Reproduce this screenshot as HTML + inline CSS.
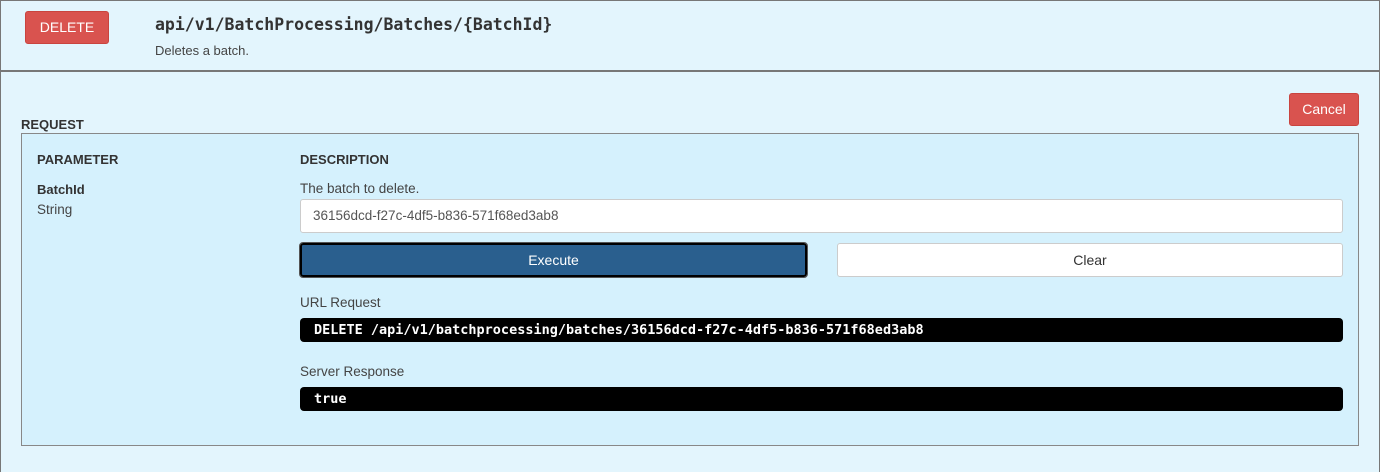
<!DOCTYPE html>
<html><head><style>
body{margin:0;width:1380px;height:471px;overflow:hidden;background:#e3f5fd;font-family:"Liberation Sans",sans-serif;color:#333;}
.page{position:absolute;left:0;top:0;width:1378px;height:471px;border:1px solid #777;border-bottom:none;background:#e3f5fd;}
.hdr{position:absolute;left:-1px;top:-1px;width:1380px;height:70px;border-bottom:2px solid #777;}
.del{position:absolute;left:25px;top:11px;width:84px;height:33px;background:#d9534f;border:1px solid #c9443f;border-radius:3px;color:#fff;font-size:14px;line-height:31px;text-align:center;box-sizing:border-box;}
.path{position:absolute;left:155px;top:15px;font-family:"DejaVu Sans Mono","Liberation Mono",monospace;font-weight:bold;font-size:16.5px;color:#333;}
.desc{position:absolute;left:155px;top:43px;font-size:13px;color:#444;}
.cancel{position:absolute;left:1288px;top:92px;width:70px;height:33px;background:#d9534f;border:1px solid #c9443f;border-radius:3px;color:#fff;font-size:14px;line-height:31px;text-align:center;box-sizing:border-box;}
.req{position:absolute;left:20px;top:116px;font-size:13px;font-weight:bold;color:#333;}
.box{position:absolute;left:20px;top:132px;width:1338px;height:313px;border:1px solid #888;background:#d5f1fd;box-sizing:border-box;}
.lbl{position:absolute;font-size:13px;font-weight:bold;color:#333;}
.t{position:absolute;font-size:13.5px;color:#444;}
.input{position:absolute;left:278px;top:65px;width:1043px;height:34px;background:#fff;border:1px solid #ccc;border-radius:3px;box-sizing:border-box;font-size:13.5px;color:#555;padding:8px 12px;}
.exec{position:absolute;left:278px;top:109px;width:507px;height:34px;background:#2a5f8e;border:2px solid #000;outline:1px solid #555;border-radius:3px;box-sizing:border-box;color:#fff;font-size:14px;text-align:center;line-height:30px;}
.clear{position:absolute;left:815px;top:109px;width:506px;height:34px;background:#fff;border:1px solid #ccc;border-radius:3px;box-sizing:border-box;color:#333;font-size:14px;text-align:center;line-height:32px;}
.code{position:absolute;left:278px;width:1043px;height:24px;background:#000;border-radius:4px;color:#fff;font-family:"DejaVu Sans Mono","Liberation Mono",monospace;font-weight:bold;font-size:13.5px;line-height:24px;padding-left:14px;box-sizing:border-box;}
</style></head><body>
<div class="page">
<div class="hdr">
<div class="del">DELETE</div>
<div class="path">api/v1/BatchProcessing/Batches/{BatchId}</div>
<div class="desc">Deletes a batch.</div>
</div>
<div class="cancel">Cancel</div>
<div class="req">REQUEST</div>
<div class="box">
<div class="lbl" style="left:15px;top:18px">PARAMETER</div>
<div class="lbl" style="left:278px;top:18px">DESCRIPTION</div>
<div class="lbl" style="left:15px;top:48px">BatchId</div>
<div class="t" style="left:15px;top:68px">String</div>
<div class="t" style="left:278px;top:47px">The batch to delete.</div>
<div class="input">36156dcd-f27c-4df5-b836-571f68ed3ab8</div>
<div class="exec">Execute</div>
<div class="clear">Clear</div>
<div class="t" style="left:278px;top:161px">URL Request</div>
<div class="code" style="top:184px">DELETE /api/v1/batchprocessing/batches/36156dcd-f27c-4df5-b836-571f68ed3ab8</div>
<div class="t" style="left:278px;top:230px">Server Response</div>
<div class="code" style="top:253px">true</div>
</div>
</div>
</body></html>
